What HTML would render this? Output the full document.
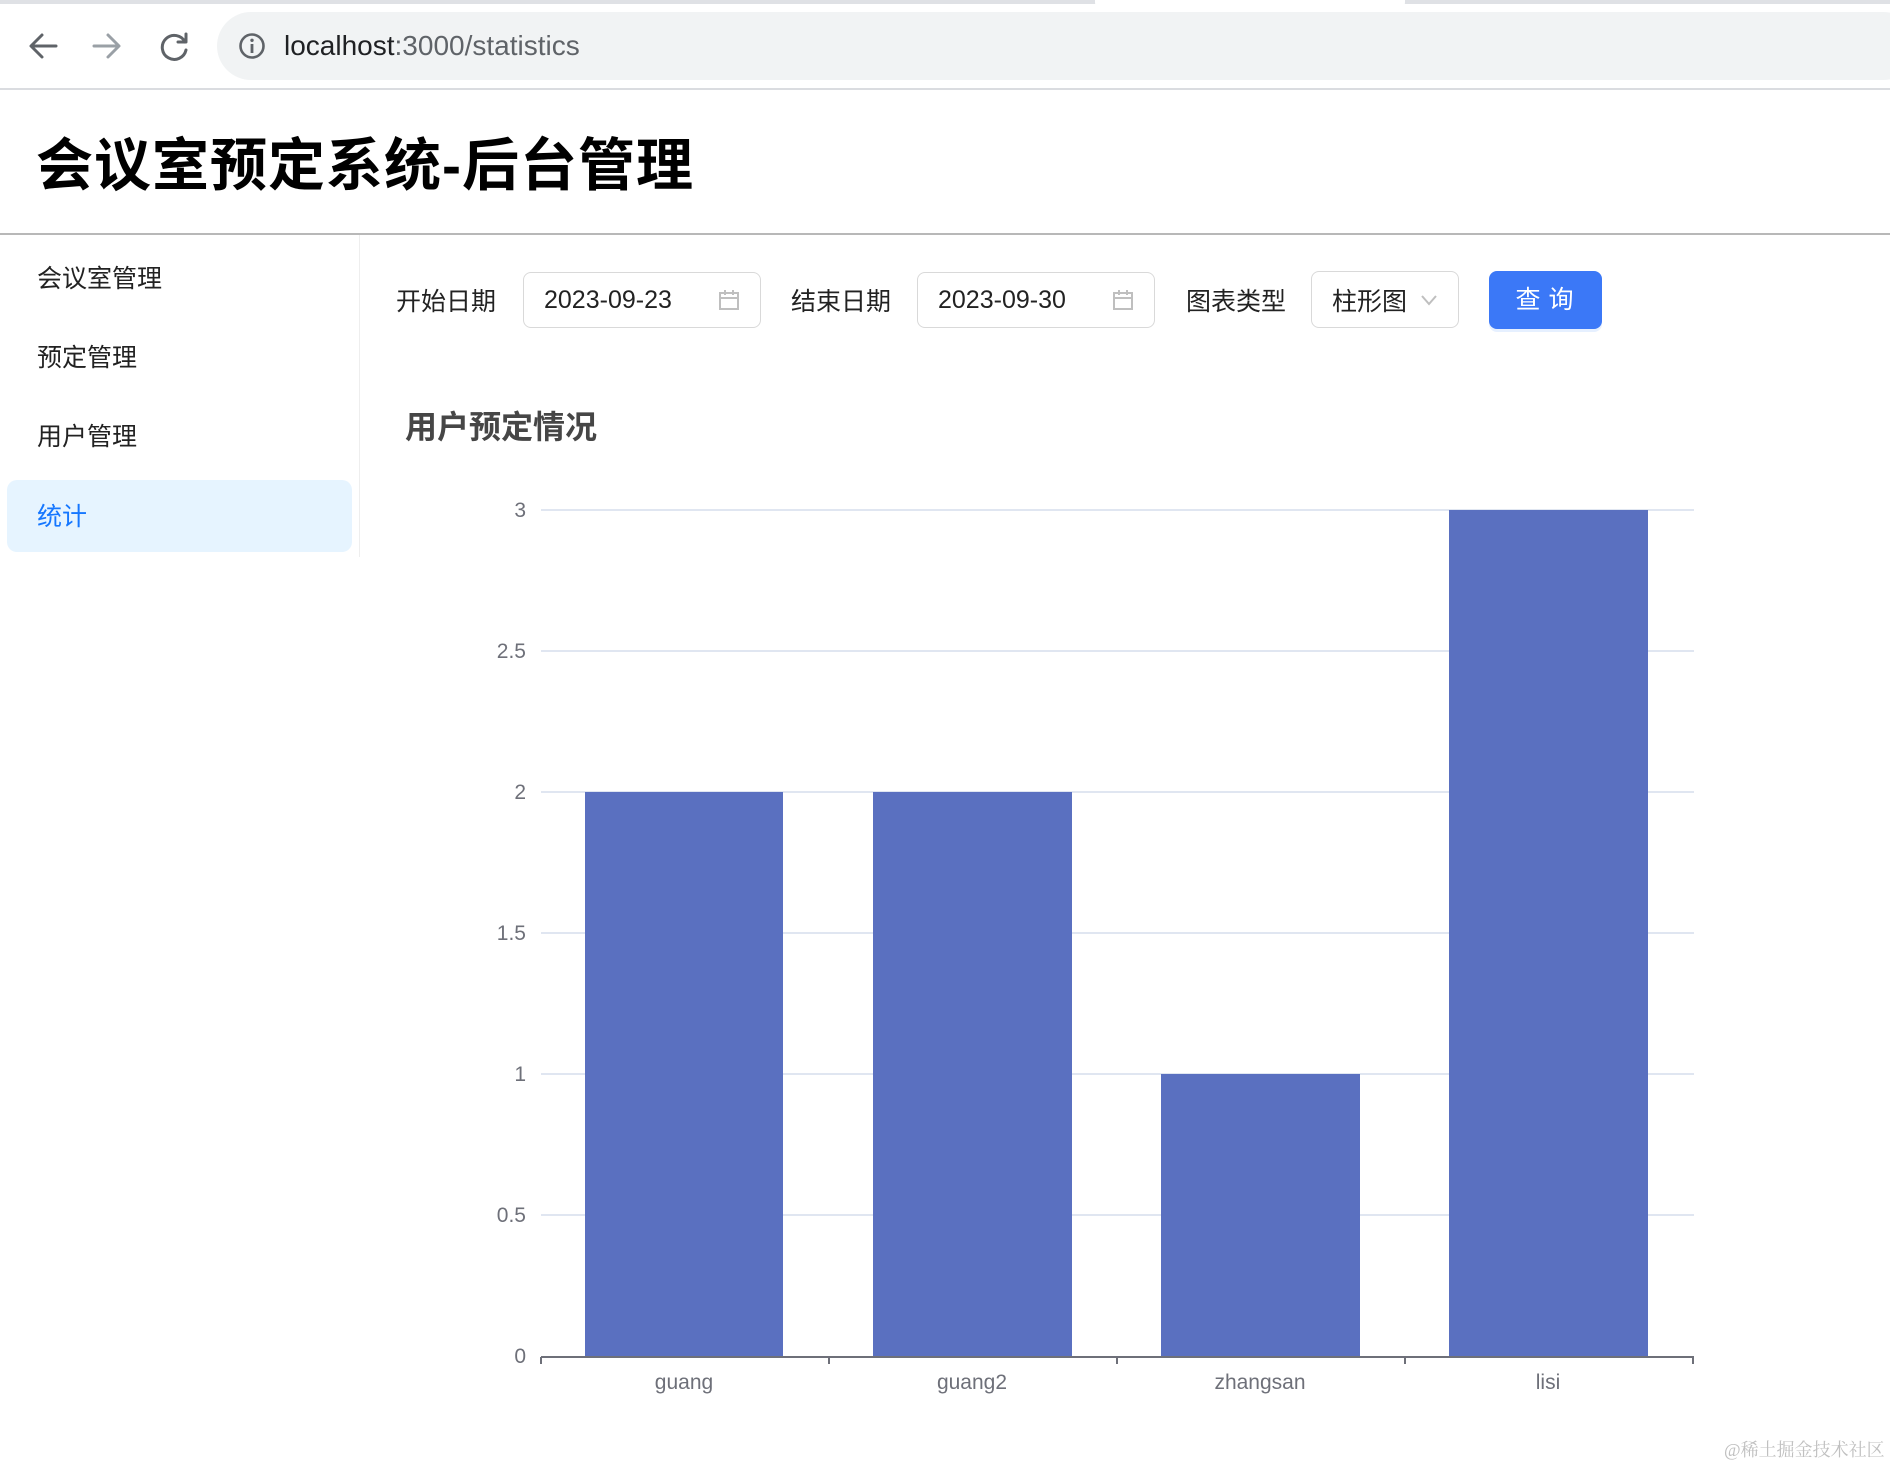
<!DOCTYPE html>
<html><head><meta charset="utf-8"><style>
*{margin:0;padding:0;box-sizing:border-box}
body{width:1890px;height:1464px;background:#fff;font-family:"Liberation Sans","Noto Sans CJK SC",sans-serif;position:relative;overflow:hidden;color:#222}
.abs{position:absolute}
.lbl{font-size:25px;color:#222;top:282px}
.inp{border:1.5px solid #d9d9d9;border-radius:8px;top:272px;height:56px;background:#fff}
.inp span{position:absolute;left:20px;top:13px;font-size:25px;color:#222}
.menu{left:37px;font-size:25px;color:#222}
</style></head><body>
<div class="abs" style="left:0;top:0;width:1890px;height:4px;background:#dfe1e5"></div>
<div class="abs" style="left:1095px;top:0;width:310px;height:12px;background:#fff;border-radius:0 0 10px 10px"></div>
<div class="abs" style="left:217px;top:12px;width:1700px;height:68px;background:#f1f3f4;border-radius:34px"></div>
<div class="abs" style="left:0;top:88px;width:1890px;height:2px;background:#dadce0"></div>
<svg class="abs" style="left:26px;top:30px" width="170" height="32" viewBox="0 0 170 32" fill="none" stroke-width="3" stroke-linecap="round" stroke-linejoin="round">
<path d="M30 16H6M16 5 5 16l11 11" stroke="#5f6368"/>
<path d="M68 16h24M82 5l11 11-11 11" stroke="#9aa0a6"/>
<path d="M159 12a12 12 0 1 0 1 8" stroke="#5f6368"/><path d="M160 4v8h-8" stroke="#5f6368"/>
</svg>
<svg class="abs" style="left:238px;top:32px" width="28" height="28" viewBox="0 0 28 28"><circle cx="14" cy="14" r="11.5" fill="none" stroke="#5f6368" stroke-width="2.6"/><rect x="12.6" y="12" width="2.8" height="9" fill="#5f6368"/><circle cx="14" cy="8.3" r="1.7" fill="#5f6368"/></svg>
<div class="abs" style="left:284px;top:30px;font-size:28px;color:#202124">localhost<span style="color:#5f6368">:3000/statistics</span></div>
<div class="abs" style="left:36px;top:120px;font-size:57px;font-weight:bold;color:#000;letter-spacing:1px">会议室预定系统-后台管理</div>
<div class="abs" style="left:0;top:233px;width:1890px;height:2px;background:#b8b8b8"></div>
<div class="abs" style="left:359px;top:235px;width:1px;height:322px;background:#eee"></div>
<div class="abs menu" style="top:259px">会议室管理</div>
<div class="abs menu" style="top:338px">预定管理</div>
<div class="abs menu" style="top:417px">用户管理</div>
<div class="abs" style="left:7px;top:480px;width:345px;height:72px;background:#e6f4ff;border-radius:10px"></div>
<div class="abs menu" style="top:497px;color:#1677ff">统计</div>
<div class="abs lbl" style="left:396px">开始日期</div>
<div class="abs inp" style="left:523px;width:238px"><span>2023-09-23</span>
<svg class="abs" style="right:20px;top:16px" width="22" height="22" viewBox="0 0 22 22" fill="none" stroke="#bfbfbf" stroke-width="2"><rect x="2" y="4" width="18" height="16"/><path d="M2 9h18M7 1v5M15 1v5"/></svg></div>
<div class="abs lbl" style="left:791px">结束日期</div>
<div class="abs inp" style="left:917px;width:238px"><span>2023-09-30</span>
<svg class="abs" style="right:20px;top:16px" width="22" height="22" viewBox="0 0 22 22" fill="none" stroke="#bfbfbf" stroke-width="2"><rect x="2" y="4" width="18" height="16"/><path d="M2 9h18M7 1v5M15 1v5"/></svg></div>
<div class="abs lbl" style="left:1186px">图表类型</div>
<div class="abs inp" style="left:1311px;width:148px;top:271px;height:57px"><span style="top:10px">柱形图</span>
<svg class="abs" style="right:20px;top:21px" width="18" height="14" viewBox="0 0 18 14" fill="none" stroke="#bfbfbf" stroke-width="2"><path d="M2 3l7 8 7-8"/></svg></div>
<div class="abs" style="left:1489px;top:271px;width:113px;height:58px;background:#3b78f7;border-radius:8px;color:#fff;font-size:25px;text-align:center;line-height:58px;letter-spacing:8px;padding-left:6px;box-shadow:0 3px 0 #e6f0ff">查询</div>
<div class="abs" style="left:405px;top:402px;font-size:32px;font-weight:bold;color:#464646">用户预定情况</div>
<svg class="abs" style="left:0;top:0" width="1890" height="1464">
<g stroke="#e0e6f1" stroke-width="2">
<line x1="541" y1="510" x2="1694" y2="510"/><line x1="541" y1="651" x2="1694" y2="651"/><line x1="541" y1="792" x2="1694" y2="792"/><line x1="541" y1="933" x2="1694" y2="933"/><line x1="541" y1="1074" x2="1694" y2="1074"/><line x1="541" y1="1215" x2="1694" y2="1215"/>
</g>
<g fill="#5a70c0">
<rect x="585" y="792" width="198" height="564"/><rect x="873" y="792" width="199" height="564"/><rect x="1161" y="1074" width="199" height="282"/><rect x="1449" y="510" width="199" height="846"/>
</g>
<g stroke="#6e7079" stroke-width="2"><line x1="541" y1="1357" x2="1694" y2="1357"/>
<line x1="541" y1="1357" x2="541" y2="1364"/><line x1="829" y1="1357" x2="829" y2="1364"/><line x1="1117" y1="1357" x2="1117" y2="1364"/><line x1="1405" y1="1357" x2="1405" y2="1364"/><line x1="1693" y1="1357" x2="1693" y2="1364"/></g>
<g font-family="Liberation Sans, sans-serif" font-size="21" fill="#6e7079" text-anchor="end">
<text x="526" y="517">3</text><text x="526" y="658">2.5</text><text x="526" y="799">2</text><text x="526" y="940">1.5</text><text x="526" y="1081">1</text><text x="526" y="1222">0.5</text><text x="526" y="1363">0</text>
</g>
<g font-family="Liberation Sans, sans-serif" font-size="21" fill="#6e7079" text-anchor="middle">
<text x="684" y="1389">guang</text><text x="972" y="1389">guang2</text><text x="1260" y="1389">zhangsan</text><text x="1548" y="1389">lisi</text>
</g>
</svg>
<div class="abs" style="left:1724px;top:1436px;font-size:18px;color:#c0c0c0;font-family:'Liberation Serif','Noto Serif CJK SC',serif">@稀土掘金技术社区</div>
</body></html>
